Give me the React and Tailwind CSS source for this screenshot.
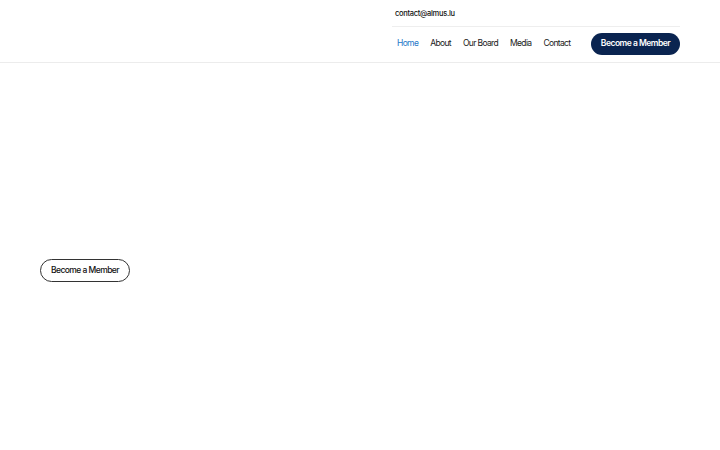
export default function App() {
  const links = ["Home", "About", "Our Board", "Media", "Contact"];
  return (
    <div className="min-h-screen bg-white text-[#111]" style={{ fontFamily: "Inter, 'Liberation Sans', sans-serif" }}>
      <header className="border-b border-[#ececec] h-[63px] px-[40px] flex justify-end">
        <div className="w-[288px] flex flex-col">
          <div className="h-[27px] border-b border-[#eeeeee] flex items-center pt-[2px] pl-[3px] text-[7.5px] font-medium tracking-[-0.3px] text-[#111]">
            contact@almus.lu
          </div>
          <div className="flex-1 flex items-center justify-between pl-[5px] pb-[2px]">
            <nav className="flex items-center gap-[12px] text-[8.5px] tracking-[-0.65px]">
              {links.map((l, i) => (
                <a key={l} href="#" className={i === 0 ? "text-[#1f78c8]" : "text-[#1a1a1a]"}>{l}</a>
              ))}
            </nav>
            <button className="h-[22px] w-[89px] rounded-full bg-[#0a2450] text-white text-[8.5px] font-semibold tracking-[-0.5px]">
              Become a Member
            </button>
          </div>
        </div>
      </header>
      <main className="px-[40px] pt-[192px]">
        <button className="h-[23px] w-[90px] rounded-full border border-[#333] text-[8.5px] font-medium tracking-[-0.55px] text-[#111]">
          Become a Member
        </button>
      </main>
    </div>
  );
}
